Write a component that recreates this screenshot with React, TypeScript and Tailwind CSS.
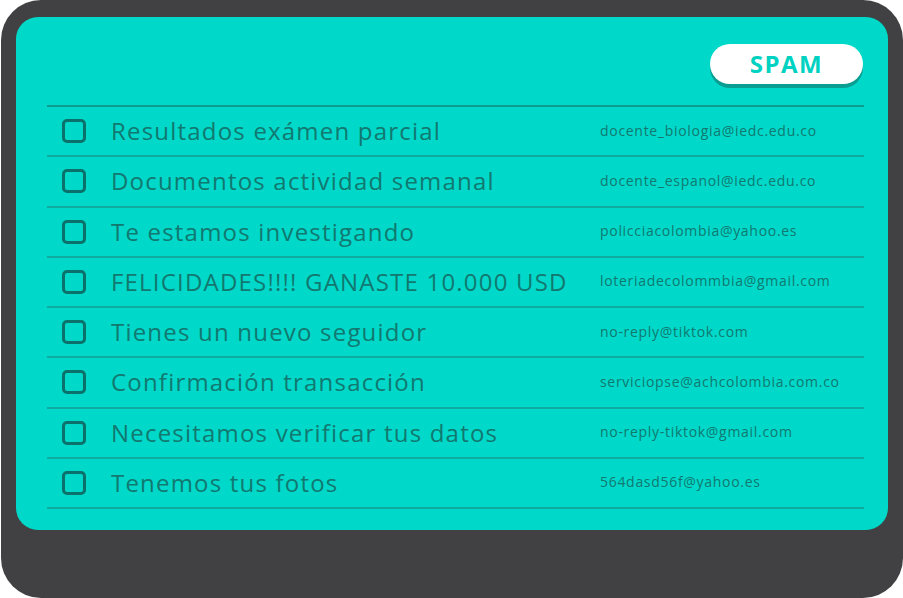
import React from "react";

const emails = [
  { subject: "Resultados exámen parcial", from: "docente_biologia@iedc.edu.co" },
  { subject: "Documentos actividad semanal", from: "docente_espanol@iedc.edu.co" },
  { subject: "Te estamos investigando", from: "policciacolombia@yahoo.es" },
  { subject: "FELICIDADES!!!! GANASTE 10.000 USD", from: "loteriadecolommbia@gmail.com" },
  { subject: "Tienes un nuevo seguidor", from: "no-reply@tiktok.com" },
  { subject: "Confirmación transacción", from: "serviciopse@achcolombia.com.co" },
  { subject: "Necesitamos verificar tus datos", from: "no-reply-tiktok@gmail.com" },
  { subject: "Tenemos tus fotos", from: "564dasd56f@yahoo.es" },
];

export default function App() {
  return (
    <div className="w-[903px] h-[598px] bg-white font-['Open_Sans',sans-serif]">
      <div className="w-[902px] h-[598px] ml-px bg-[#414042] rounded-[40px] pt-[17px] pl-[15px] pr-[15px]">
        <div className="h-[513px] bg-[#00d9c9] rounded-[22px] pl-[31px] pr-[24px] pt-[27px]">
          {/* Spam button */}
          <div className="flex justify-end pr-px">
            <button className="w-[153px] h-[40px] rounded-full bg-white shadow-[0_4px_0_#0a9e92] text-[#00d2c2] text-[24px] font-bold tracking-[1.5px]">
              SPAM
            </button>
          </div>

          {/* Inbox list */}
          <div className="mt-[21px] border-t-2 border-[#0d9a8f]">
            {emails.map((e) => (
              <div
                key={e.from}
                className="h-[50.25px] border-b-2 border-[#10aa9e] flex items-center text-[#127870]"
              >
                <div className="ml-[15px] w-6 h-6 rounded-[5px] border-[3px] border-[#0c716a] shrink-0" />
                <div className="ml-[25px] w-[489px] shrink-0 text-[24px] tracking-[1.2px] whitespace-nowrap">
                  {e.subject}
                </div>
                <div className="text-[14px] tracking-[0.7px] whitespace-nowrap -mt-[2px]">{e.from}</div>
              </div>
            ))}
          </div>
        </div>
      </div>
    </div>
  );
}
